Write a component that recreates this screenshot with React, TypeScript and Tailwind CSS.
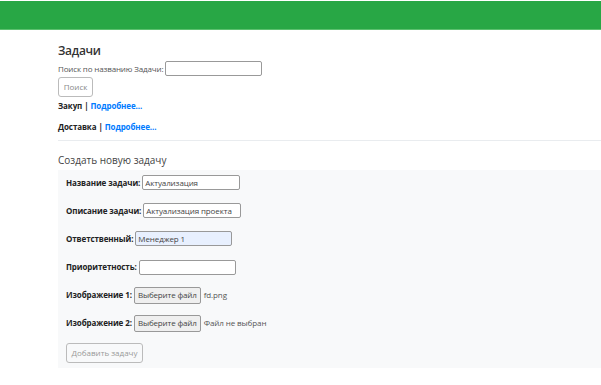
import React from 'react';

const font = { fontFamily: '"Open Sans", "Noto Sans", sans-serif' };

const Field = ({ label, children }: { label: string; children: React.ReactNode }) => (
  <div className="flex items-center h-[17px] gap-[2px]">
    <span className="text-[8px] font-bold text-[#222] tracking-[-0.1px]">{label}</span>
    {children}
  </div>
);

const TextInput = ({ value = '', width = 'w-[98px]', bg = 'bg-white' }: { value?: string; width?: string; bg?: string }) => (
  <div className={`${width} h-[15px] ${bg} border border-[#999] rounded-[2px] px-[2px] flex items-center text-[8px] text-[#444] tracking-[-0.1px]`}>
    {value}
  </div>
);

const FileInput = ({ name }: { name: string }) => (
  <div className="flex items-center gap-[3px]">
    <div className="h-[17px] px-[3px] flex items-center bg-[#efefef] border border-[#999] rounded-[2px] text-[8px] text-[#444] tracking-[-0.15px]">
      Выберите файл
    </div>
    <span className="text-[8px] text-[#555] tracking-[-0.1px]">{name}</span>
  </div>
);

export default function App() {
  return (
    <div className="w-[601px] h-[385px] bg-white overflow-hidden" style={font}>
      <div className="mt-[1px] h-[29px] bg-[#28a745] border-b border-[#5cc06f]" />

      <div className="pl-[58px]">
        <h2 className="mt-[13px] text-[12px] font-semibold text-[#333] leading-[16px] tracking-[-0.3px]">Задачи</h2>
        <div className="mt-[2px] flex items-center gap-[2px]">
          <span className="text-[8px] text-[#555] tracking-[-0.15px]">Поиск по названию Задачи:</span>
          <div className="w-[97px] h-[15px] border border-[#999] rounded-[2px] bg-white" />
        </div>
        <div className="mt-[1px] w-[35px] h-[20px] border border-[#bbb] rounded-[3px] flex items-center justify-center text-[8px] text-[#888]">
          Поиск
        </div>
        <div className="mt-[3px] text-[8px] font-bold text-[#222] leading-[11px] tracking-[-0.1px]">
          Закуп | <span className="text-[#007bff]">Подробнее...</span>
        </div>
        <div className="mt-[10px] text-[8px] font-bold text-[#222] leading-[11px] tracking-[-0.1px]">
          Доставка | <span className="text-[#007bff]">Подробнее...</span>
        </div>
        <div className="mt-[8px] border-t border-[#e9ecef]" />
        <h3 className="mt-[12px] text-[10px] text-[#444] leading-[14px]">Создать новую задачу</h3>

        <div className="mt-[3px] h-[198px] bg-[#f8f9fa] pl-[8px] pt-[4px] flex flex-col gap-[11.2px]">
          <Field label="Название задачи:">
            <TextInput value="Актуализация" />
          </Field>
          <Field label="Описание задачи:">
            <TextInput value="Актуализация проекта" />
          </Field>
          <Field label="Ответственный:">
            <TextInput value="Менеджер 1" width="w-[97px]" bg="bg-[#e8f0fe]" />
          </Field>
          <Field label="Приоритетность:">
            <TextInput width="w-[97px]" />
          </Field>
          <Field label="Изображение 1:">
            <FileInput name="fd.png" />
          </Field>
          <Field label="Изображение 2:">
            <FileInput name="Файл не выбран" />
          </Field>
          <div className="w-[77px] h-[20px] border border-[#bbb] rounded-[3px] flex items-center justify-center text-[8px] text-[#999]">
            Добавить задачу
          </div>
        </div>
      </div>
    </div>
  );
}
